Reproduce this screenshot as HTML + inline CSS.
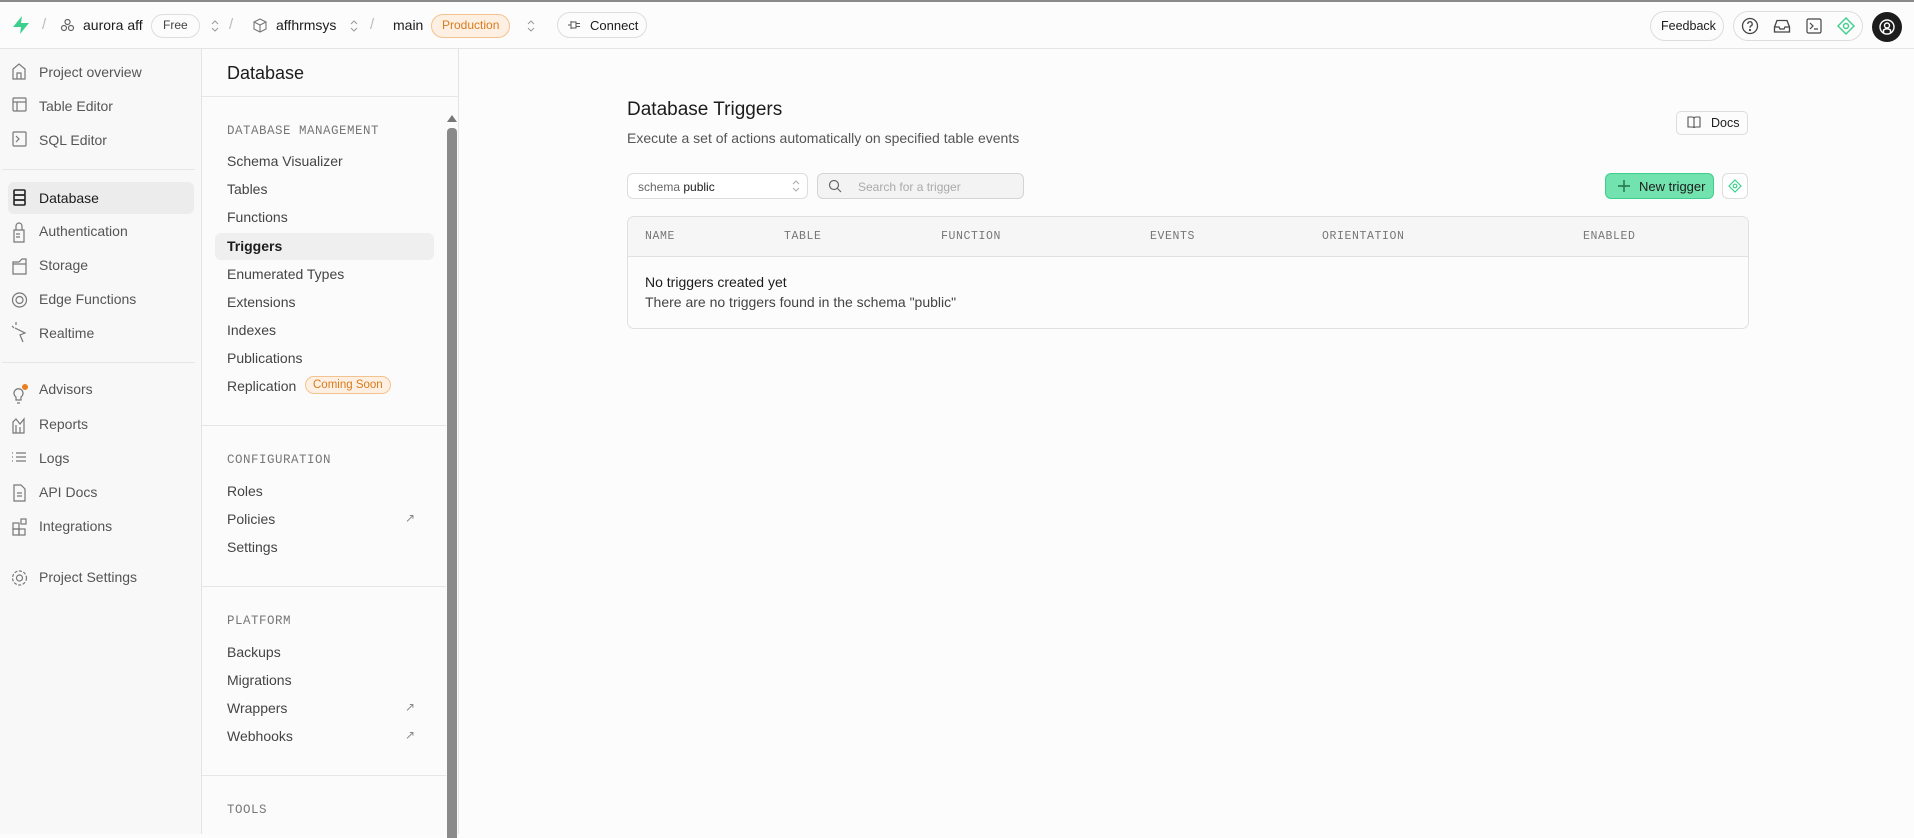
<!DOCTYPE html>
<html><head><meta charset="utf-8"><style>
*{box-sizing:border-box;margin:0;padding:0}
body{width:1914px;height:834px;overflow:hidden;background:#fcfcfc;font-family:"Liberation Sans",sans-serif;color:#1c1c1c;position:relative}
.a{position:absolute;white-space:nowrap}
.top{position:absolute;left:0;top:0;width:1914px;height:49px;border-top:2px solid #8a8a8a;border-bottom:1px solid #e4e4e4;background:#fcfcfc}
.side{position:absolute;left:0;top:49px;width:202px;height:785px;background:#f8f8f8;border-right:1px solid #e4e4e4}
.p2{position:absolute;left:202px;top:49px;width:257px;height:785px;background:#fbfbfb;border-right:1px solid #e4e4e4}
.nav{position:absolute;left:39px;font-size:14px;color:#555}
.it{position:absolute;left:25px;font-size:14px;color:#444}
.hd{position:absolute;left:25px;font-family:"Liberation Mono",monospace;font-size:12.5px;color:#777;letter-spacing:.5px}
.dv{position:absolute;height:1px;background:#e6e6e6}
.badge{position:absolute;border-radius:12px;font-size:12px;padding:2px 8px}
.th{position:absolute;top:230px;font-family:"Liberation Mono",monospace;font-size:11.5px;color:#777;letter-spacing:.6px}
.arr{position:absolute;left:203px;font-size:12px;color:#888}
</style></head><body>
<div class="top">
<svg class="a" style="left:11px;top:13px" width="20" height="20" viewBox="0 0 20 20"><path d="M11 1 L2 12 H10 L9 19 L18 8 H10 Z" fill="#3ecf8e"/></svg>
<span class="a" style="left:42px;top:14px;color:#bbb;font-size:15px">/</span>
<svg class="a" style="left:60px;top:16px" width="15" height="15" viewBox="0 0 15 15" fill="none" stroke="#666" stroke-width="1.2"><circle cx="7.5" cy="4" r="2.5"/><circle cx="4" cy="10" r="2.5"/><circle cx="11" cy="10" r="2.5"/></svg>
<span class="a" style="left:83px;top:15px;font-size:14px">aurora aff</span>
<span class="badge a" style="left:151px;top:12px;border:1px solid #ddd;color:#444;height:24px;padding:3px 11px">Free</span>
<span class="a" style="left:229px;top:14px;color:#bbb;font-size:15px">/</span>
<svg class="a" style="left:253px;top:16px" width="14" height="15" viewBox="0 0 14 15" fill="none" stroke="#777" stroke-width="1.1"><path d="M7 1 L13 4 V11 L7 14 L1 11 V4 Z M1 4 L7 7 L13 4 M7 7 V14"/></svg>
<span class="a" style="left:276px;top:15px;font-size:14px">affhrmsys</span>
<span class="a" style="left:370px;top:14px;color:#bbb;font-size:15px">/</span>
<span class="a" style="left:393px;top:15px;font-size:14px">main</span>
<span class="badge a" style="left:431px;top:12px;background:#fdf0e2;border:1px solid #f4c28e;color:#d97a1c;height:24px;padding:3px 10px">Production</span>
<svg class="a" style="left:210px;top:16px" width="10" height="16" viewBox="0 0 10 16" fill="none" stroke="#999"><path d="M2 6 L5 3 L8 6 M2 10 L5 13 L8 10"/></svg>
<svg class="a" style="left:349px;top:16px" width="10" height="16" viewBox="0 0 10 16" fill="none" stroke="#999"><path d="M2 6 L5 3 L8 6 M2 10 L5 13 L8 10"/></svg>
<svg class="a" style="left:526px;top:16px" width="10" height="16" viewBox="0 0 10 16" fill="none" stroke="#999"><path d="M2 6 L5 3 L8 6 M2 10 L5 13 L8 10"/></svg>
<div class="a" style="left:557px;top:10px;width:90px;height:26px;border:1px solid #ddd;border-radius:14px;font-size:13px;padding:5px 0 0 32px">Connect</div>
<svg class="a" style="left:567px;top:17px" width="14" height="12" viewBox="0 0 14 12" fill="none" stroke="#555"><path d="M1 6 H4 M4 2 V10 M4 3 H9 V9 H4 M9 4.5 H13 M9 7.5 H13"/></svg>
<div class="a" style="left:1650px;top:9px;width:74px;height:30px;border:1px solid #ddd;border-radius:15px;font-size:12.5px;padding:7px 0 0 10px">Feedback</div>
<div class="a" style="left:1733px;top:9px;width:130px;height:30px;border:1px solid #ddd;border-radius:15px"></div>
<svg class="a" style="left:1741px;top:15px" width="18" height="18" viewBox="0 0 18 18" fill="none" stroke="#444" stroke-width="1.3"><circle cx="9" cy="9" r="7.5"/><path d="M6.8 7 a2.2 2.2 0 1 1 3 2 c-.8.4-.8 1-.8 1.8"/><circle cx="9" cy="13" r=".5" fill="#444"/></svg>
<svg class="a" style="left:1773px;top:15px" width="18" height="18" viewBox="0 0 18 18" fill="none" stroke="#444" stroke-width="1.3"><path d="M1.5 10 L4 3.5 H14 L16.5 10 V15 H1.5 Z M1.5 10 H6 L7 12 H11 L12 10 H16.5"/></svg>
<svg class="a" style="left:1806px;top:16px" width="16" height="16" viewBox="0 0 16 16" fill="none" stroke="#444" stroke-width="1.2"><rect x="1" y="1" width="14" height="14" rx="1.5"/><path d="M4 5 L7 8 L4 11 M8 11 H12"/></svg>
<svg class="a" style="left:1836px;top:14px" width="20" height="20" viewBox="0 0 20 20" fill="none" stroke="#3ecf8e" stroke-width="1.4"><path d="M10 2 L18 10 L10 18 L2 10 Z"/><circle cx="10" cy="10" r="2.5"/></svg>
<div class="a" style="left:1872px;top:10px;width:30px;height:30px;border-radius:50%;background:#1c1c1c"></div>
<svg class="a" style="left:1878px;top:16px" width="18" height="18" viewBox="0 0 18 18" fill="none" stroke="#fff" stroke-width="1.4"><circle cx="9" cy="9" r="7"/><circle cx="9" cy="7.5" r="2.5"/><path d="M5.5 15 V12 Q9 9.5 12.5 12 V15"/></svg>
</div>

<div class="side">
<div class="a" style="left:8px;top:133px;width:186px;height:32px;background:#ececec;border-radius:6px"></div>
<div class="nav" style="top:15px">Project overview</div>
<div class="nav" style="top:49px">Table Editor</div>
<div class="nav" style="top:83px">SQL Editor</div>
<div class="dv" style="left:2px;top:120px;width:193px"></div>
<div class="nav" style="top:141px;color:#1c1c1c">Database</div>
<div class="nav" style="top:174px">Authentication</div>
<div class="nav" style="top:208px">Storage</div>
<div class="nav" style="top:242px">Edge Functions</div>
<div class="nav" style="top:276px">Realtime</div>
<div class="dv" style="left:2px;top:313px;width:193px"></div>
<div class="nav" style="top:332px">Advisors</div>
<div class="nav" style="top:367px">Reports</div>
<div class="nav" style="top:401px">Logs</div>
<div class="nav" style="top:435px">API Docs</div>
<div class="nav" style="top:469px">Integrations</div>
<div class="nav" style="top:520px">Project Settings</div>
<svg class="a" style="left:11px;top:0" width="22" height="560" viewBox="0 0 22 560" fill="none" stroke="#777" stroke-width="1.2">
<path d="M2 30 V20 L8 15 L14 20 V30 Z M6 30 V24 H10 V30"/>
<rect x="2" y="49" width="13" height="13" rx="1"/><path d="M2 53 H15 M6 53 V62"/>
<rect x="2" y="83" width="13" height="14" rx="1"/><path d="M5 87 L8 90 L5 93"/>
<rect x="3" y="141" width="11" height="5" rx="1" stroke="#222" stroke-width="1.6"/><rect x="3" y="146" width="11" height="5" rx="1" stroke="#222" stroke-width="1.6"/><rect x="3" y="151" width="11" height="5" rx="1" stroke="#222" stroke-width="1.6"/>
<path d="M3 181 H13 V193 H3 Z M5 181 V177 A3 3 0 0 1 11 177 V181 M5 185 H9 M5 188 H9"/>
<path d="M2 213 H8 L11 210 H15 V225 H2 Z M2 215 H15"/>
<circle cx="8.5" cy="251" r="7"/><circle cx="8.5" cy="251" r="3.5"/>
<path d="M4 279 L14 284 L9 286 L12 293 M1 277 L3 279 M5 273 V276"/>
<path d="M5 348 A4.5 4.5 0 1 1 10 348 V351 H5 Z M6 354 H9"/><circle cx="14" cy="338" r="3" fill="#e8801f" stroke="none"/>
<path d="M2 384 V373 L5 370 L9 375 L13 370 V384 Z M5 376 V384 M9 378 V384"/>
<path d="M1 404 H2 M1 408 H2 M1 412 H2 M5 404 H15 M5 408 H15 M5 412 H15"/>
<path d="M3 436 H10 L14 440 V452 H3 Z M6 444 H11 M6 447 H11"/>
<rect x="2" y="474" width="6" height="6"/><rect x="2" y="480" width="6" height="6"/><rect x="8" y="480" width="6" height="6"/><rect x="10" y="470" width="5" height="5"/>
<circle cx="8.5" cy="529" r="3"/><circle cx="8.5" cy="529" r="7" stroke-dasharray="3 1.6"/>
</svg>
</div>

<div class="p2">
<div class="a" style="left:25px;top:14px;font-size:18px">Database</div>
<div class="dv" style="left:0;top:47px;width:257px"></div>
<div class="a" style="left:13px;top:184px;width:219px;height:27px;background:#efefef;border-radius:6px"></div>
<div class="hd" style="top:75px">DATABASE MANAGEMENT</div>
<div class="it" style="top:104px">Schema Visualizer</div>
<div class="it" style="top:132px">Tables</div>
<div class="it" style="top:160px">Functions</div>
<div class="it" style="top:189px;color:#1c1c1c;font-weight:bold">Triggers</div>
<div class="it" style="top:217px">Enumerated Types</div>
<div class="it" style="top:245px">Extensions</div>
<div class="it" style="top:273px">Indexes</div>
<div class="it" style="top:301px">Publications</div>
<div class="it" style="top:329px">Replication</div>
<span class="badge a" style="left:103px;top:327px;background:#fdf0e2;border:1px solid #f4c28e;color:#d97a1c;font-size:11.5px;padding:2px 7px">Coming Soon</span>
<div class="dv" style="left:0;top:376px;width:244px"></div>
<div class="hd" style="top:404px">CONFIGURATION</div>
<div class="it" style="top:434px">Roles</div>
<div class="it" style="top:462px">Policies</div><div class="arr" style="top:462px">↗</div>
<div class="it" style="top:490px">Settings</div>
<div class="dv" style="left:0;top:537px;width:244px"></div>
<div class="hd" style="top:565px">PLATFORM</div>
<div class="it" style="top:595px">Backups</div>
<div class="it" style="top:623px">Migrations</div>
<div class="it" style="top:651px">Wrappers</div><div class="arr" style="top:651px">↗</div>
<div class="it" style="top:679px">Webhooks</div><div class="arr" style="top:679px">↗</div>
<div class="dv" style="left:0;top:726px;width:244px"></div>
<div class="hd" style="top:754px">TOOLS</div>
<div class="a" style="left:245px;top:66px;width:0;height:0;border-left:5px solid transparent;border-right:5px solid transparent;border-bottom:7px solid #777"></div>
<div class="a" style="left:245px;top:79px;width:10px;height:710px;background:#8a8a8a;border-radius:4px 4px 0 0"></div>
</div>

<div class="a" style="left:627px;top:99px;font-size:19px">Database Triggers</div>
<div class="a" style="left:627px;top:130px;font-size:14px;color:#555">Execute a set of actions automatically on specified table events</div>
<div class="a" style="left:1676px;top:111px;width:72px;height:24px;border:1px solid #ddd;border-radius:5px;font-size:12.5px;padding:4px 0 0 34px">Docs</div>
<svg class="a" style="left:1687px;top:116px" width="14" height="13" viewBox="0 0 14 13" fill="none" stroke="#555" stroke-width="1.1"><path d="M1 1 H5 Q7 1 7 3 V12 Q7 11 5 11 H1 Z M13 1 H9 Q7 1 7 3 M13 1 V11 H9 Q7 11 7 12"/></svg>
<div class="a" style="left:627px;top:173px;width:181px;height:26px;border:1px solid #ddd;border-radius:6px;background:#fff;font-size:12px;padding:6px 0 0 10px;color:#666">schema <span style="color:#1c1c1c">public</span></div>
<svg class="a" style="left:791px;top:179px" width="10" height="14" viewBox="0 0 10 14" fill="none" stroke="#aaa"><path d="M2 5 L5 2 L8 5 M2 9 L5 12 L8 9"/></svg>
<div class="a" style="left:817px;top:173px;width:207px;height:26px;border:1px solid #d4d4d4;border-radius:6px;background:#f3f3f3;font-size:12px;padding:6px 0 0 40px;color:#aaa">Search for a trigger</div>
<svg class="a" style="left:828px;top:179px" width="14" height="14" viewBox="0 0 14 14" fill="none" stroke="#666" stroke-width="1.2"><circle cx="6" cy="6" r="4.5"/><path d="M9.5 9.5 L13 13"/></svg>
<div class="a" style="left:1605px;top:173px;width:109px;height:26px;border:1px solid #3ecf8e;border-radius:6px;background:#72e3ae;font-size:13px;padding:5px 0 0 33px;color:#1c1c1c">New trigger</div>
<svg class="a" style="left:1617px;top:179px" width="14" height="14" viewBox="0 0 14 14" stroke="#1f6f4a" stroke-width="1.4"><path d="M7 1 V13 M1 7 H13"/></svg>
<div class="a" style="left:1722px;top:173px;width:26px;height:26px;border:1px solid #ddd;border-radius:6px;background:#fff"></div>
<svg class="a" style="left:1728px;top:179px" width="14" height="14" viewBox="0 0 14 14" fill="none" stroke="#3ecf8e" stroke-width="1.2"><path d="M7 1 L13 7 L7 13 L1 7 Z"/><circle cx="7" cy="7" r="1.8"/></svg>
<div class="a" style="left:627px;top:216px;width:1122px;height:113px;border:1px solid #e0e0e0;border-radius:7px;background:#fcfcfc;overflow:hidden">
<div style="height:40px;background:#f6f6f6;border-bottom:1px solid #e0e0e0"></div></div>
<div class="th" style="left:645px">NAME</div>
<div class="th" style="left:784px">TABLE</div>
<div class="th" style="left:941px">FUNCTION</div>
<div class="th" style="left:1150px">EVENTS</div>
<div class="th" style="left:1322px">ORIENTATION</div>
<div class="th" style="left:1583px">ENABLED</div>
<div class="a" style="left:645px;top:274px;font-size:14px">No triggers created yet</div>
<div class="a" style="left:645px;top:294px;font-size:14px;color:#444">There are no triggers found in the schema "public"</div>
</body></html>
